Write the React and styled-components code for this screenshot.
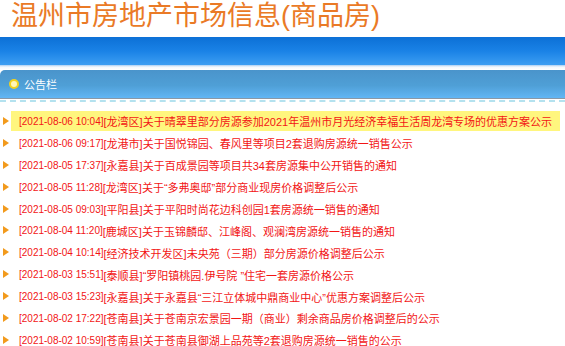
import React from 'react';
import styled, { createGlobalStyle } from 'styled-components';

const GlobalStyle = createGlobalStyle`
  body {
    margin: 0;
    background: #fff;
    font-family: "Liberation Sans", "Noto Sans CJK SC", sans-serif;
  }
`;

const Page = styled.div`
  width: 565px;
  height: 346px;
  overflow: hidden;
  background: #fff;
`;

const Title = styled.h1`
  margin: 0;
  height: 37px;
  padding-left: 11px;
  font-size: 27px;
  font-weight: normal;
  line-height: 33px;
  color: #ea7a26;
  white-space: nowrap;
`;

const TopBar = styled.div`
  height: 28px;
  background: linear-gradient(#0c70d6, #1a82e6 50%, #3d9ef2);
`;

const Divider = styled.div`
  height: 5px;
  background: linear-gradient(#a9cdf2, #f4f8fc 40%, #ffffff);
`;

const NoticeBar = styled.div`
  display: flex;
  align-items: center;
  gap: 5px;
  height: 28px;
  padding-left: 9px;
  border-radius: 5px 0 0 0;
  border-bottom: 1px solid #8a98a6;
  background: linear-gradient(#4a94cb, #4f9fd6 55%, #62b6f4);
`;

const Dot = styled.span`
  width: 6px;
  height: 6px;
  border-radius: 50%;
  border: 2px solid #f2d21e;
  background: #fff6b8;
`;

const NoticeLabel = styled.span`
  color: #fff;
  font-size: 11px;
  font-family: "Noto Sans CJK SC", sans-serif;
`;

const List = styled.ul`
  list-style: none;
  margin: 1px 0 0;
  padding: 8px 0 0;
  border-top: 2px dashed #b4e2ef;
`;

const Row = styled.li`
  display: flex;
  align-items: center;
  height: 21.9px;
`;

const Arrow = styled.span`
  width: 0;
  height: 0;
  margin: 0 2px 0 3px;
  border-top: 4.5px solid transparent;
  border-bottom: 4.5px solid transparent;
  border-left: 6px solid #f29a1c;
`;

const Link = styled.a`
  display: flex;
  align-items: center;
  height: 20px;
  padding: 1px 8px 0;
  box-sizing: border-box;
  font-size: 11px;
  color: #f21515;
  text-decoration: none;
  white-space: nowrap;
  background: ${p => (p.$active ? '#fff67e' : 'transparent')};
`;

const Stamp = styled.span`
  font-size: 10px;
`;

const items = [
  ['2021-08-06 10:04', '龙湾区', '关于晴翠里部分房源参加2021年温州市月光经济幸福生活周龙湾专场的优惠方案公示'],
  ['2021-08-06 09:17', '龙港市', '关于国悦锦园、春风里等项目2套退购房源统一销售公示'],
  ['2021-08-05 17:37', '永嘉县', '关于百成景园等项目共34套房源集中公开销售的通知'],
  ['2021-08-05 11:28', '龙湾区', '关于“多弗奥邸”部分商业现房价格调整后公示'],
  ['2021-08-05 09:03', '平阳县', '关于平阳时尚花边科创园1套房源统一销售的通知'],
  ['2021-08-04 11:20', '鹿城区', '关于玉锦麟邸、江峰阁、观澜湾房源统一销售的通知'],
  ['2021-08-04 10:14', '经济技术开发区', '未央苑（三期）部分房源价格调整后公示'],
  ['2021-08-03 15:51', '泰顺县', '“罗阳镇桃园.伊号院 ”住宅一套房源价格公示'],
  ['2021-08-03 15:23', '永嘉县', '关于永嘉县“三江立体城中鼎商业中心”优惠方案调整后公示'],
  ['2021-08-02 17:22', '苍南县', '关于苍南京宏景园一期（商业）剩余商品房价格调整后的公示'],
  ['2021-08-02 10:59', '苍南县', '关于苍南县御湖上品苑等2套退购房源统一销售的公示'],
];

export default function App() {
  return (
    <>
      <GlobalStyle />
      <Page>
        <Title>温州市房地产市场信息(商品房)</Title>
        <TopBar />
        <Divider />
        <NoticeBar>
          <Dot />
          <NoticeLabel>公告栏</NoticeLabel>
        </NoticeBar>
        <List>
          {items.map(([time, area, text], i) => (
            <Row key={i}>
              <Arrow />
              <Link href="#" $active={i === 0}>
                <Stamp>[{time}]</Stamp>[{area}]{text}
              </Link>
            </Row>
          ))}
        </List>
      </Page>
    </>
  );
}
